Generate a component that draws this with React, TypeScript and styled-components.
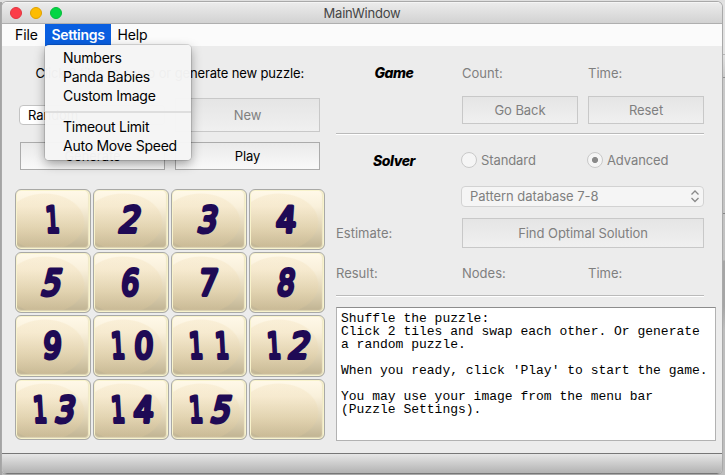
import React from "react";
import styled, { createGlobalStyle } from "styled-components";

const Global = createGlobalStyle`
  * { box-sizing: border-box; }
  html, body { margin: 0; padding: 0; }
  body { width: 725px; height: 475px; overflow: hidden; font-family: Inter, "Liberation Sans", sans-serif; }
`;

const Desktop = styled.div`
  width: 725px;
  height: 475px;
  padding: 2px 3px 2px 2px;
  overflow: hidden;
  background:
    linear-gradient(#b5b5b5, #b5b5b5) 723px 54px / 2px 1px no-repeat,
    linear-gradient(#909090, #909090) 723px 77px / 2px 1px no-repeat,
    linear-gradient(#858585, #858585) 723px 213px / 2px 1px no-repeat,
    linear-gradient(#e0e0e0 0 2px, transparent 2px),
    linear-gradient(90deg, #a4a4a4 0 2px, transparent 2px),
    linear-gradient(#e2e2e2 0 54px, #c9c9c9 77px, #c0c0c0 260px, #a5a5a5 261px 306px, #bdbdbd 330px);
`;

const Window = styled.div`
  display: flex;
  flex-direction: column;
  height: 472px;
  border-radius: 5px;
  overflow: hidden;
  background: #ececec;
  box-shadow: 0 0 0 1px #a9a9a9;
`;

const TitleBar = styled.header`
  display: grid;
  grid-template-columns: 80px 1fr 80px;
  align-items: center;
  height: 22px;
  flex: none;
  background: linear-gradient(#ebebeb, #d2d2d2);
  border-bottom: 1px solid #afafaf;
  border-top: 1px solid #f5f5f5;
`;

const Lights = styled.div`
  display: flex;
  gap: 8px;
  padding-left: 8px;
`;

const Light = styled.span<{ $fill: string; $edge: string }>`
  width: 12px;
  height: 12px;
  border-radius: 50%;
  background: ${(p) => p.$fill};
  border: 1px solid ${(p) => p.$edge};
`;

const Title = styled.div`
  text-align: center;
  font-size: 13px;
  letter-spacing: -0.2px;
  color: #454545;
`;

const MenuBar = styled.nav`
  display: flex;
  height: 22px;
  flex: none;
  padding-left: 4px;
  background: #fbfbfb;
  font-size: 14px;
`;

const MenuItem = styled.div<{ $active?: boolean; $w: number }>`
  position: relative;
  width: ${(p) => p.$w}px;
  padding-left: ${(p) => (p.$active ? 0 : 2)}px;
  line-height: 22px;
  text-align: center;
  white-space: nowrap;
  letter-spacing: ${(p) => (p.$active ? "-0.3px" : "-0.1px")};
  font-weight: ${(p) => (p.$active ? 600 : 400)};
  color: ${(p) => (p.$active ? "#fff" : "#000")};
  background: ${(p) => (p.$active ? "#0a5fe0" : "transparent")};
`;

const Dropdown = styled.div`
  position: absolute;
  z-index: 2;
  left: 0;
  top: 21px;
  width: 146px;
  height: 115px;
  padding: 3px 0 0 18px;
  text-align: left;
  font-size: 14px;
  font-weight: 400;
  letter-spacing: -0.25px;
  color: #000;
  border-radius: 4px;
  background: rgba(245, 245, 245, 0.975);
  box-shadow: 0 0 0 1px rgba(0, 0, 0, 0.12), 0 4px 11px rgba(0, 0, 0, 0.36);
`;

const Option = styled.div`
  height: 19px;
  line-height: 19px;
`;

const Divider = styled.div`
  height: 2px;
  margin: 6px 0 4px -18px;
  background: #dedede;
`;

const Body = styled.main`
  display: flex;
  height: 407px;
  flex: none;
  font-size: 13px;
`;

const LeftPane = styled.section`
  width: 310px;
  margin-left: 13px;
  flex: none;
`;

const Prompt = styled.div`
  height: 16px;
  margin: 19px 21px 0 0;
  line-height: 16px;
  text-align: right;
  white-space: nowrap;
  letter-spacing: -0.14px;
`;

const Controls = styled.div`
  display: grid;
  grid-template-columns: 145px 145px;
  grid-template-rows: 34px 28px;
  gap: 10px;
  align-items: center;
  padding: 17px 5px 19px;
`;

const Button = styled.button<{ $disabled?: boolean }>`
  width: 100%;
  height: 100%;
  padding: 0;
  font: inherit;
  letter-spacing: -0.05px;
  border: 1px solid ${(p) => (p.$disabled ? "#c8c8c8" : "#ababab")};
  color: ${(p) => (p.$disabled ? "#7f7f7f" : "#000")};
  background: ${(p) => (p.$disabled ? "linear-gradient(#e5e5e5, #f0f0f0)" : "linear-gradient(#eaeaea, #f9f9f9)")};
`;

const Select = styled.div<{ $disabled?: boolean }>`
  display: flex;
  align-items: center;
  justify-content: space-between;
  height: ${(p) => (p.$disabled ? 21 : 20)}px;
  margin-left: -1px;
  padding: 0 ${(p) => (p.$disabled ? 3 : 0)}px 1px 8px;
  border: 1px solid ${(p) => (p.$disabled ? "#d2d2d2" : "#c3c3c3")};
  border-radius: 4px;
  letter-spacing: -0.05px;
  color: ${(p) => (p.$disabled ? "#7f7f7f" : "#000")};
  background: ${(p) => (p.$disabled ? "#f5f5f5" : "#fff")};
`;

const Grid = styled.div`
  display: grid;
  grid-template-columns: repeat(4, 76px);
  grid-template-rows: 61px 61px 62px 61px;
  gap: 2px;
`;

const Tile = styled.div`
  overflow: hidden;
  border: 1px solid #a9a9a6;
  border-radius: 6px;
  box-shadow: inset 0 0 0 1px #f8f3cc, inset 0 -2px 1px #ddd5b8, inset -2px 0 1px #f0e9c8;
  background:
    radial-gradient(ellipse 40px 29px at 29px 32px, rgba(235, 210, 160, 0.2) 96%, transparent 100%),
    linear-gradient(#fff9e9, #f9f0db 28%, #dfd3b4 65%, #beb190);
`;

const TileFace = styled.svg`
  display: block;
  width: 74px;
  height: 59px;
`;

const Digit = styled.text`
  font: 400 35px "DejaVu Sans", sans-serif;
  text-anchor: middle;
  fill: #1f0a55;
  stroke: #1f0a55;
  stroke-width: 4px;
  stroke-linejoin: round;
  stroke-linecap: round;
`;

const RightPane = styled.section`
  width: 380px;
  margin-left: 11px;
  flex: none;
`;

const Row = styled.div<{ $h: number; $top?: number }>`
  display: grid;
  grid-template-columns: 116px 116px 116px;
  column-gap: 10px;
  align-items: center;
  height: ${(p) => p.$h}px;
  margin-top: ${(p) => p.$top ?? 0}px;
`;

const Heading = styled.h2`
  margin: 0;
  font: italic 800 14px Inter, sans-serif;
  letter-spacing: -0.45px;
  text-align: center;
`;

const Label = styled.span`
  color: #7f7f7f;
`;

const Wide = styled.div`
  grid-column: 2 / 4;
  height: 100%;
`;

const Rule = styled.div<{ $top: number }>`
  width: 368px;
  height: 2px;
  margin-top: ${(p) => p.$top}px;
  background: linear-gradient(#bababa 50%, #fff 50%);
`;

const RadioLabel = styled.label`
  display: flex;
  align-items: center;
  gap: 4px;
  margin-left: -1px;
  letter-spacing: -0.1px;
  color: #7f7f7f;
`;

const Dot = styled.span<{ $on?: boolean }>`
  width: 16px;
  height: 16px;
  flex: none;
  border: 1px solid #c9c9c9;
  border-radius: 50%;
  background: ${(p) => (p.$on ? "radial-gradient(circle, #8a8a8a 0 2.7px, #f5f5f5 3.4px)" : "#f5f5f5")};
`;

const Log = styled.pre`
  width: 380px;
  height: 134px;
  margin: 10px 0 0;
  padding: 4px 0 0 4px;
  border: 1px solid #b2b2b2;
  border-top-color: #8d8d8d;
  background: #fff;
  color: #000;
  font: 13px/13px "Liberation Mono", monospace;
`;

const StatusBar = styled.footer`
  height: 21px;
  flex: none;
  border-top: 1px solid #777;
  border-bottom: 1px solid #777;
  background: linear-gradient(#e6e6e6, #b2b2b2);
`;

const message = `Shuffle the puzzle:
Click 2 tiles and swap each other. Or generate
a random puzzle.

When you ready, click 'Play' to start the game.

You may use your image from the menu bar
(Puzzle Settings).`;

const tiles = [...Array.from({ length: 15 }, (_, i) => String(i + 1)), ""];

/* Lean (degrees) and horizontal squeeze of each hand-lettered numeral. */
const lettering: Record<string, [number, number]> = {
  "0": [-2, 0.85],
  "1": [3, 0.62],
  "2": [-14, 0.92],
  "3": [-12, 0.85],
  "4": [-4, 0.9],
  "5": [-14, 0.87],
  "6": [-6, 0.8],
  "7": [-6, 0.85],
  "8": [-8, 0.78],
  "9": [-4, 0.82],
};

function Numeral({ value }: { value: string }) {
  const centers = value.length === 1 ? [36.5] : [24, 50];
  return (
    <TileFace viewBox="0 0 74 59">
      {value.split("").map((d, i) => {
        const [lean, squeeze] = lettering[d];
        return (
          <g key={i} transform={`translate(${centers[i]} 29) skewX(${lean}) scale(${squeeze} 1)`}>
            <Digit x={0} y={12.5}>{d}</Digit>
          </g>
        );
      })}
    </TileFace>
  );
}

function Chevrons() {
  return (
    <svg width="10" height="14" viewBox="0 0 10 14" fill="none" stroke="#898989" strokeWidth="1.3">
      <path d="M1.5 5.5 5 2 8.5 5.5M1.5 9 5 12.5 8.5 9" />
    </svg>
  );
}

export default function App() {
  return (
    <>
      <Global />
      <Desktop>
        <Window>
          <TitleBar>
            <Lights>
              <Light $fill="#fc3d49" $edge="#e0343f" />
              <Light $fill="#fdbc02" $edge="#dea000" />
              <Light $fill="#02d644" $edge="#08b93b" />
            </Lights>
            <Title>MainWindow</Title>
          </TitleBar>
          <MenuBar>
            <MenuItem $w={39}>File</MenuItem>
            <MenuItem $w={66} $active>
              Settings
              <Dropdown>
                <Option>Numbers</Option>
                <Option>Panda Babies</Option>
                <Option>Custom Image</Option>
                <Divider />
                <Option>Timeout Limit</Option>
                <Option>Auto Move Speed</Option>
              </Dropdown>
            </MenuItem>
            <MenuItem $w={41}>Help</MenuItem>
          </MenuBar>
          <Body>
            <LeftPane>
              <Prompt>Click 2 tiles to swap or generate new puzzle:</Prompt>
              <Controls>
                <Select>Random</Select>
                <Button $disabled>New</Button>
                <Button>Generate</Button>
                <Button>Play</Button>
              </Controls>
              <Grid>
                {tiles.map((n, i) => (
                  <Tile key={i}>{n && <Numeral value={n} />}</Tile>
                ))}
              </Grid>
            </LeftPane>
            <RightPane>
              <Row $h={16} $top={18}>
                <Heading>Game</Heading>
                <Label>Count:</Label>
                <Label>Time:</Label>
              </Row>
              <Row $h={28} $top={16}>
                <span />
                <Button $disabled>Go Back</Button>
                <Button $disabled>Reset</Button>
              </Row>
              <Rule $top={9} />
              <Row $h={18} $top={16}>
                <Heading>Solver</Heading>
                <RadioLabel><Dot />Standard</RadioLabel>
                <RadioLabel><Dot $on />Advanced</RadioLabel>
              </Row>
              <Row $h={21} $top={17}>
                <span />
                <Wide>
                  <Select $disabled>Pattern database 7-8 <Chevrons /></Select>
                </Wide>
              </Row>
              <Row $h={30} $top={11}>
                <Label>Estimate:</Label>
                <Wide><Button $disabled>Find Optimal Solution</Button></Wide>
              </Row>
              <Row $h={16} $top={17}>
                <Label>Result:</Label>
                <Label>Nodes:</Label>
                <Label>Time:</Label>
              </Row>
              <Rule $top={14} />
              <Log>{message}</Log>
            </RightPane>
          </Body>
          <StatusBar />
        </Window>
      </Desktop>
    </>
  );
}
